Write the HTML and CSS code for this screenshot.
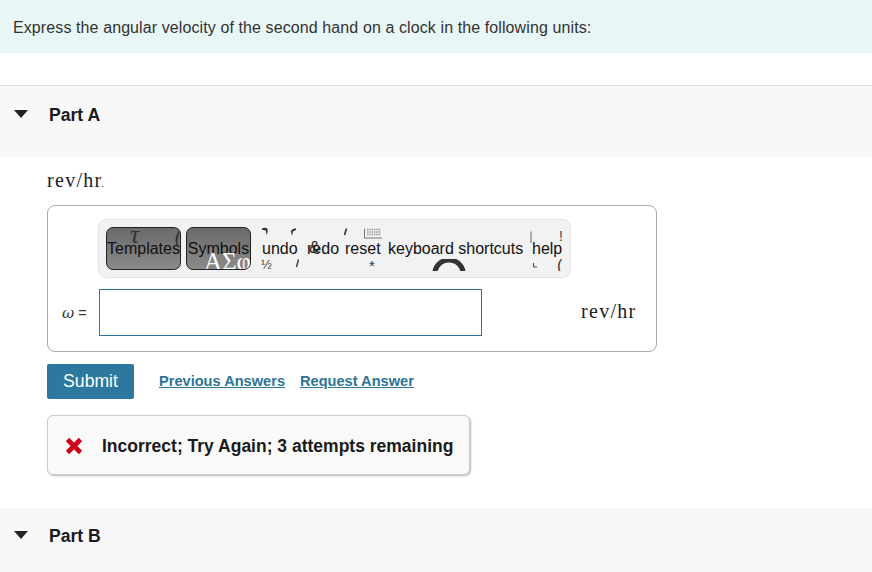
FILE: index.html
```html
<!DOCTYPE html>
<html lang="en">
<head>
<meta charset="utf-8">
<title>Part A</title>
<link rel="stylesheet" href="styles.css">
</head>
<body>
<div class="intro">Express the angular velocity of the second hand on a clock in the following units:</div>
<section class="part part-a">
  <header class="part-head"><span class="caret"></span><span class="part-title">Part A</span></header>
  <div class="part-body">
    <p class="prompt">rev/hr<span class="dot">.</span></p>
    <div class="answer-box">
      <div class="toolbar">
        <div class="tb tb-btn tb-templates"><span class="frag tau">τ</span><span class="frag paren">(</span>Templates</div>
        <div class="tb tb-btn tb-symbols">Symbols<span class="frag sym">ΑΣφ</span></div>
        <div class="tb tb-undo">undo
          <svg class="frag undo-a" width="7" height="11" viewBox="0 0 7 11"><path d="M0 1.500 Q4 0 5.500 2 Q6.500 5 4.500 8 L4 4 Q3 2.500 0 3Z" fill="#333"/></svg>
          <span class="frag frac">½</span>
        </div>
        <div class="tb tb-redo">redo
          <svg class="frag redo-a" width="7" height="10" viewBox="0 0 7 10"><path d="M6 .5 Q2 0 1 3 Q1 5 2 8 L3 3.500 Q4 2.500 6 2Z" fill="#333"/></svg>
          <span class="frag amp">&amp;</span>
          <svg class="frag slash-a" width="5" height="10" viewBox="0 0 5 10"><path d="M3.500 .5 L1.500 8" stroke="#333" stroke-width="1.300"/></svg>
        </div>
        <div class="tb tb-reset">reset
          <svg class="frag tick" width="5" height="9" viewBox="0 0 5 9"><path d="M3.500 .5 L1.500 7" stroke="#333" stroke-width="1.600"/></svg>
          <span class="frag star">*</span>
        </div>
        <div class="tb tb-keys">keyboard shortcuts
          <svg class="frag kbd" width="20" height="11" viewBox="0 0 20 11"><path d="M1.500 .5V10H19" fill="none" stroke="#777"/><path d="M4 1.500H18M4 4H18M4 6.500H18" stroke="#999" stroke-width="1.300" stroke-dasharray="1.500 .8"/></svg>
          <svg class="frag arc" width="34" height="12" viewBox="0 0 34 12"><path d="M3 14 A14 13 0 0 1 31 14" fill="none" stroke="#333" stroke-width="5"/></svg>
        </div>
        <div class="tb tb-help">help
          <svg class="frag bar" width="4" height="13" viewBox="0 0 4 13"><path d="M2 .5V12" stroke="#666"/></svg>
          <span class="frag bang">!</span>
          <svg class="frag corner" width="6" height="6" viewBox="0 0 6 6"><path d="M1.500 0V4H5" fill="none" stroke="#444"/></svg>
          <span class="frag open">(</span>
        </div>
      </div>
      <div class="input-row">
        <span class="var"><i>ω</i> =</span>
        <div class="field"></div>
        <span class="unit">rev/hr</span>
      </div>
    </div>
    <div class="actions">
      <button class="submit" type="button">Submit</button>
      <a class="link" href="#">Previous Answers</a>
      <a class="link" href="#">Request Answer</a>
    </div>
    <div class="feedback">
      <svg class="x" width="18" height="18" viewBox="0 0 18 18"><path d="M2.500 2.500 L15.500 15.500 M15.500 2.500 L2.500 15.500" stroke="#d0021b" stroke-width="4.600"/></svg>
      <span>Incorrect; Try Again; 3 attempts remaining</span>
    </div>
  </div>
</section>
<section class="part part-b">
  <header class="part-head"><span class="caret"></span><span class="part-title">Part B</span></header>
</section>
</body>
</html>
```
FILE: styles.css
```css
* { box-sizing: border-box; }
html, body { margin: 0; padding: 0; }
body {
  width: 872px;
  height: 572px;
  overflow: hidden;
  background: #fff;
  font-family: "Liberation Sans", Arial, sans-serif;
  color: #1a1a1a;
}
.intro {
  height: 53px;
  background: #e8f6f6;
  padding: 18px 13px 0;
  font-size: 16px;
  letter-spacing: .1px;
  line-height: 20px;
  color: #333;
}
.part-a { margin-top: 32px; border-top: 1px solid #ddd; }
.part-head {
  display: flex;
  align-items: flex-start;
  background: #f8f8f8;
  height: 71px;
  padding: 18px 0 0 14px;
}
.caret {
  width: 0;
  height: 0;
  margin-top: 6px;
  border-left: 7px solid transparent;
  border-right: 7px solid transparent;
  border-top: 8px solid #222;
}
.part-title {
  margin-left: 21px;
  font-size: 17.6px;
  font-weight: 700;
  line-height: 22px;
}
.part-body { padding: 0 0 0 47px; }
.prompt {
  margin: 0;
  padding-top: 12px;
  height: 48px;
  font-family: "Liberation Serif", serif;
  font-size: 20px;
  letter-spacing: 1.300px;
  line-height: 22px;
  color: #222;
}
.dot { font-size: 10px; margin-left: -1px; }
.answer-box {
  width: 610px;
  height: 147px;
  border: 1px solid #aaa;
  border-radius: 8px;
  background: #fff;
  padding: 13px 0 0 50px;
}
.toolbar {
  display: flex;
  align-items: center;
  width: 473px;
  height: 59px;
  padding-left: 7px;
  background: #f2f2f2;
  border: 1px solid #e4e4e4;
  border-radius: 8px;
  font-size: 16px;
  color: #111;
}
.tb { position: relative; line-height: 20px; white-space: nowrap; }
.tb-btn {
  height: 43px;
  border: 1px solid #222;
  border-radius: 7px;
  background: linear-gradient(#6a6a6a, #8a8a8a);
  text-align: center;
  line-height: 41px;
  overflow: hidden;
}
.tb-templates { width: 75px; }
.tb-symbols { width: 65px; margin-left: 5px; }
.tb-undo { margin-left: 11px; width: 36px; }
.tb-redo { margin-left: 9px; width: 31px; }
.tb-reset { margin-left: 7px; width: 36px; }
.tb-keys { margin-left: 7px; width: 136px; }
.tb-help { margin-left: 8px; width: 30px; }
.frag { position: absolute; }
.tau { left: 23px; top: -1px; font: italic 26px/16px "Liberation Serif", serif; color: #333; }
.paren { right: -2px; top: 0; font: italic 22px/16px "Liberation Serif", serif; color: #333; }
.sym { right: -1px; top: 22px; font: 25px/24px "Liberation Serif", serif; color: #fff; }
.undo-a { left: 0; top: -12px; }
.frac { left: -1px; top: 20px; height: 11px; overflow: hidden; font-size: 13px; line-height: 12px; color: #444; }
.redo-a { left: -17px; top: -11px; }
.amp { left: 2px; top: 1px; font-size: 17px; line-height: 16px; color: #222; }
.slash-a { left: -12px; top: 20px; }
.tick { left: -2px; top: -11px; }
.star { left: 24px; top: 20px; font-size: 15px; line-height: 14px; color: #333; }
.kbd { left: -25px; top: -11px; }
.arc { left: 44px; top: 20px; }
.bar { left: -3px; top: -8px; }
.bang { left: 27px; top: -10px; font-size: 14px; line-height: 14px; color: #444; }
.corner { left: 0; top: 24px; }
.open { left: 25px; top: 20px; height: 12px; overflow: hidden; font-size: 16px; line-height: 14px; color: #333; }
.input-row {
  display: flex;
  align-items: center;
  height: 47px;
  margin: 11px 0 0 -50px;
  position: relative;
}
.var { width: 51px; padding-left: 14px; font-size: 14.500px; color: #333; }
.var i { font-family: "DejaVu Serif", serif; font-size: 15px; }
.field {
  width: 383px;
  height: 47px;
  border: 1px solid #2c769b;
  background: #fff;
}
.unit {
  margin-left: 99px;
  margin-bottom: 2px;
  font-family: "Liberation Serif", serif;
  font-size: 20px;
  letter-spacing: 1.300px;
  color: #222;
}
.actions {
  display: flex;
  align-items: center;
  margin-top: 12px;
  height: 35px;
}
.submit {
  width: 87px;
  height: 35px;
  border: 0;
  border-radius: 2px;
  background: #2c789e;
  color: #fff;
  font: 17.6px "Liberation Sans", Arial, sans-serif;
  padding: 0;
}
.link {
  color: #2c7498;
  font-size: 14.600px;
  font-weight: 700;
  text-decoration: underline;
  margin-left: 25px;
  margin-bottom: 2px;
}
.link + .link { margin-left: 15px; }
.feedback {
  display: flex;
  align-items: center;
  width: 423px;
  height: 60px;
  margin-top: 16px;
  padding: 2px 0 0 18px;
  background: #f9f9f9;
  border: 1px solid #ccc;
  border-radius: 6px;
  box-shadow: 1px 1px 2px #bbb;
  font-size: 17.5px;
  font-weight: 700;
}
.x { margin-right: 19px; flex: none; margin-left: -1px; width: 18px; }
.part-b { margin-top: 33px; }
.part-b .part-head { height: 64px; padding-top: 17px; }
```
